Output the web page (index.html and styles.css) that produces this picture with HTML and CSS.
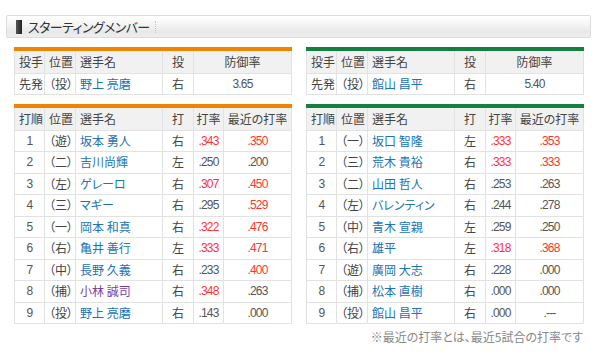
FILE: index.html
```html
<!DOCTYPE html>
<html lang="ja">
<head>
<meta charset="utf-8">
<link rel="stylesheet" href="styles.css">
</head>
<body>
<div class="wrap">
  <div class="title-bar">
    <span class="title-mark"></span>
    <span class="title-text">スターティングメンバー</span>
    <span class="title-sep"></span>
  </div>
  <div class="content">
    <div class="pair">
      <table class="tbl orange">
        <colgroup><col class="c1"><col class="c2"><col class="c3"><col class="c4"><col class="c5"><col class="c6"></colgroup>
        <tr class="head"><td class="l">投手</td><td class="l">位置</td><td class="l">選手名</td><td class="c">投</td><td class="c" colspan="2">防御率</td></tr>
        <tr><td class="l">先発</td><td class="l">（投）</td><td class="l"><a class="pl">野上 亮磨</a></td><td class="c">右</td><td class="c num" colspan="2">3.65</td></tr>
      </table>
      <table class="tbl green">
        <colgroup><col class="c1"><col class="c2"><col class="c3"><col class="c4"><col class="c5"><col class="c6"></colgroup>
        <tr class="head"><td class="l">投手</td><td class="l">位置</td><td class="l">選手名</td><td class="c">投</td><td class="c" colspan="2">防御率</td></tr>
        <tr><td class="l">先発</td><td class="l">（投）</td><td class="l"><a class="pl">館山 昌平</a></td><td class="c">右</td><td class="c num" colspan="2">5.40</td></tr>
      </table>
    </div>
    <div class="pair">
      <table class="tbl orange">
        <colgroup><col class="c1"><col class="c2"><col class="c3"><col class="c4"><col class="c5"><col class="c6"></colgroup>
        <tr class="head"><td class="l">打順</td><td class="l">位置</td><td class="l">選手名</td><td class="c">打</td><td class="c">打率</td><td class="c">最近の打率</td></tr>
        <tr><td class="c num">1</td><td class="l">（遊）</td><td class="l"><a class="pl">坂本 勇人</a></td><td class="c">右</td><td class="c num red">.343</td><td class="c num red">.350</td></tr>
        <tr><td class="c num">2</td><td class="l">（二）</td><td class="l"><a class="pl">吉川尚輝</a></td><td class="c">左</td><td class="c num">.250</td><td class="c num">.200</td></tr>
        <tr><td class="c num">3</td><td class="l">（左）</td><td class="l"><a class="pl">ゲレーロ</a></td><td class="c">右</td><td class="c num red">.307</td><td class="c num red">.450</td></tr>
        <tr><td class="c num">4</td><td class="l">（三）</td><td class="l"><a class="pl">マギー</a></td><td class="c">右</td><td class="c num">.295</td><td class="c num red">.529</td></tr>
        <tr><td class="c num">5</td><td class="l">（一）</td><td class="l"><a class="pl">岡本 和真</a></td><td class="c">右</td><td class="c num red">.322</td><td class="c num red">.476</td></tr>
        <tr><td class="c num">6</td><td class="l">（右）</td><td class="l"><a class="pl">亀井 善行</a></td><td class="c">左</td><td class="c num red">.333</td><td class="c num red">.471</td></tr>
        <tr><td class="c num">7</td><td class="l">（中）</td><td class="l"><a class="pl">長野 久義</a></td><td class="c">右</td><td class="c num">.233</td><td class="c num red">.400</td></tr>
        <tr><td class="c num">8</td><td class="l">（捕）</td><td class="l"><a class="pl visited">小林 誠司</a></td><td class="c">右</td><td class="c num red">.348</td><td class="c num">.263</td></tr>
        <tr><td class="c num">9</td><td class="l">（投）</td><td class="l"><a class="pl">野上 亮磨</a></td><td class="c">右</td><td class="c num">.143</td><td class="c num">.000</td></tr>
      </table>
      <table class="tbl green">
        <colgroup><col class="c1"><col class="c2"><col class="c3"><col class="c4"><col class="c5"><col class="c6"></colgroup>
        <tr class="head"><td class="l">打順</td><td class="l">位置</td><td class="l">選手名</td><td class="c">打</td><td class="c">打率</td><td class="c">最近の打率</td></tr>
        <tr><td class="c num">1</td><td class="l">（一）</td><td class="l"><a class="pl">坂口 智隆</a></td><td class="c">左</td><td class="c num red">.333</td><td class="c num red">.353</td></tr>
        <tr><td class="c num">2</td><td class="l">（三）</td><td class="l"><a class="pl">荒木 貴裕</a></td><td class="c">右</td><td class="c num red">.333</td><td class="c num red">.333</td></tr>
        <tr><td class="c num">3</td><td class="l">（二）</td><td class="l"><a class="pl">山田 哲人</a></td><td class="c">右</td><td class="c num">.253</td><td class="c num">.263</td></tr>
        <tr><td class="c num">4</td><td class="l">（左）</td><td class="l"><a class="pl">バレンティン</a></td><td class="c">右</td><td class="c num">.244</td><td class="c num">.278</td></tr>
        <tr><td class="c num">5</td><td class="l">（中）</td><td class="l"><a class="pl">青木 宣親</a></td><td class="c">左</td><td class="c num">.259</td><td class="c num">.250</td></tr>
        <tr><td class="c num">6</td><td class="l">（右）</td><td class="l"><a class="pl">雄平</a></td><td class="c">左</td><td class="c num red">.318</td><td class="c num red">.368</td></tr>
        <tr><td class="c num">7</td><td class="l">（遊）</td><td class="l"><a class="pl">廣岡 大志</a></td><td class="c">右</td><td class="c num">.228</td><td class="c num">.000</td></tr>
        <tr><td class="c num">8</td><td class="l">（捕）</td><td class="l"><a class="pl">松本 直樹</a></td><td class="c">右</td><td class="c num">.000</td><td class="c num">.000</td></tr>
        <tr><td class="c num">9</td><td class="l">（投）</td><td class="l"><a class="pl">館山 昌平</a></td><td class="c">右</td><td class="c num">.000</td><td class="c num">.---</td></tr>
      </table>
    </div>
    <p class="note">※最近の打率とは、最近5試合の打率です</p>
  </div>
</div>
</body>
</html>
```
FILE: styles.css
```css
html, body {
  margin: 0;
  padding: 0;
  background: #fff;
}
body {
  font-family: "Noto Sans CJK JP", "Liberation Sans", sans-serif;
  font-feature-settings: "palt";
  color: #444;
  font-size: 12px;
}
.wrap {
  padding: 15px 9px 0 6px;
}
.title-bar {
  height: 21px;
  border: 1px solid #dcdcdc;
  border-radius: 2px;
  background: linear-gradient(#ffffff 0%, #f6f6f6 35%, #e8e8e8 75%, #eeeeee 100%);
  display: flex;
  align-items: center;
  padding-left: 9px;
}
.title-mark {
  width: 6px;
  height: 14px;
  background: linear-gradient(90deg, #555, #222);
  margin-right: 6px;
}
.title-text {
  font-size: 13px;
  color: #333;
  letter-spacing: -0.6px;
}
.title-sep {
  width: 0;
  height: 12px;
  border-left: 1px dotted #c4c4c4;
  margin-left: 5px;
}
.content {
  padding: 9px 8px 0 8px;
}
.pair {
  display: flex;
  gap: 14px;
  margin-bottom: 9px;
}
.pair + .pair {
  margin-bottom: 0;
}
.tbl {
  flex: 1;
  width: 277px;
  table-layout: fixed;
  border-collapse: collapse;
  border-top: 4px solid #f08300;
}
.tbl.green {
  border-top-color: #14803f;
}
.c1 { width: 30px; }
.c2 { width: 31px; }
.c3 { width: 87px; }
.c4 { width: 31px; }
.c5 { width: 30px; }
.c6 { width: 68px; }
.tbl td {
  border: 1px solid #e2e2e2;
  height: 20.5px;
  padding: 0 4px;
  line-height: 18px;
  white-space: nowrap;
  overflow: hidden;
  color: #444;
}
.tbl tr.head td {
  background: #f1f1f1;
  height: 21.5px;
  color: #444;
}
.tbl td.l { text-align: left; }
.tbl td.c { text-align: center; padding: 0 2px; }
.tbl td.num {
  font-family: "Liberation Sans", sans-serif;
  font-size: 12px;
  letter-spacing: -0.8px;
  color: #555;
}
.tbl td.num.red { color: #ff3333; }
.pl {
  color: #2272b4;
  text-decoration: none;
}
.pl.visited { color: #7a3b9c; }
.note {
  margin: 4px 0 0;
  text-align: right;
  color: #888;
  font-size: 12px;
}
```
